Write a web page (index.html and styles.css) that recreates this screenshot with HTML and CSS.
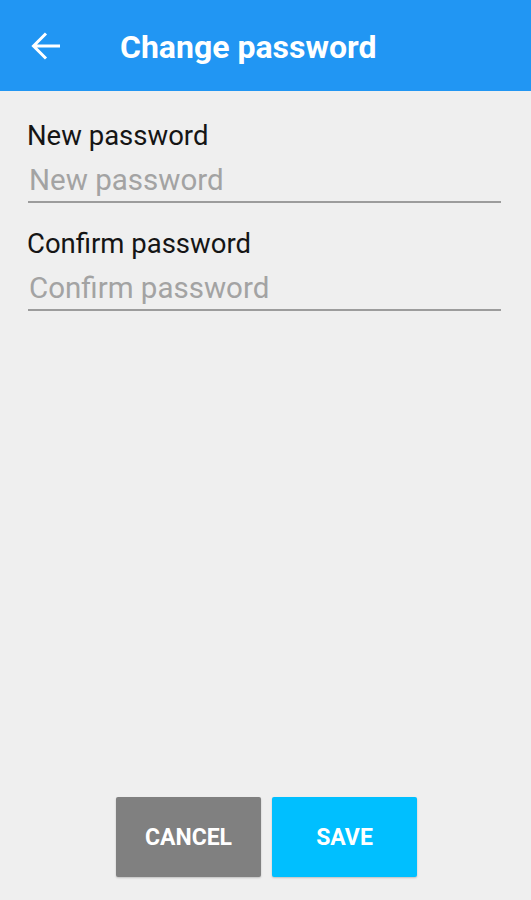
FILE: index.html
```html
<!DOCTYPE HTML>
<html lang="en">
  <head>
    <title>Change password</title>
    <meta charset="utf-8">
    <link rel="stylesheet" href="styles.css">
  </head>
  <body>
    <div id="screen">
      <div id="toolbar">
        <span class="back">
          <svg width="32" height="32" viewBox="0 0 32 32"><path d="M30 16H4M16 3.5L3.5 16 16 28.5" fill="none" stroke="#fff" stroke-width="3"/></svg>
        </span>
        <span class="title">Change password</span>
      </div>

      <div id="form">
        <div class="field">
          <label class="label">New password</label>
          <input class="input" type="password" placeholder="New password">
        </div>
        <div class="field">
          <label class="label">Confirm password</label>
          <input class="input" type="password" placeholder="Confirm password">
        </div>
      </div>

      <div id="actions">
        <button class="btn cancel">CANCEL</button>
        <button class="btn save">SAVE</button>
      </div>
    </div>
  </body>
</html>
```

FILE: styles.css
```css
html {
  height: 100%;
}
body {
  margin: 0;
  padding: 0;
  background: #efefef;
  font-family: Roboto, "Liberation Sans", sans-serif;
  height: 100%;
}

#screen {
  display: flex;
  flex-direction: column;
  height: 900px;
}

#toolbar {
  height: 91px;
  background-color: #2196f3;
  display: flex;
  align-items: center;
  color: #fff;
}

.back {
  display: flex;
  margin-left: 30px;
  width: 32px;
}

.title {
  margin-left: 58px;
  font-size: 32px;
  font-weight: bold;
  margin-top: 3px;
}

#form {
  flex: 1;
  padding: 29px 30px 0 28px;
}

.field {
  display: flex;
  flex-direction: column;
  margin-bottom: 25px;
}

.label {
  font-size: 27.5px;
  color: #151515;
  line-height: 32px;
  margin-left: -1px;
}

.input {
  box-sizing: border-box;
  border: 0;
  border-bottom: 2px solid #9c9c9c;
  background: transparent;
  font-family: Roboto, "Liberation Sans", sans-serif;
  font-size: 29.5px;
  padding: 10px 0 4px 1px;
  height: 51px;
  outline: none;
}
.input::placeholder {
  color: #a3a3a3;
}

#actions {
  display: flex;
  justify-content: center;
  gap: 11px;
  padding: 0 0 23px 2px;
}

.btn {
  width: 145px;
  height: 80px;
  border: 0;
  border-radius: 2px;
  color: #fff;
  font-family: Roboto, "Liberation Sans", sans-serif;
  font-size: 23px;
  font-weight: bold;
  box-shadow: 0 1px 2px rgba(0,0,0,0.2);
}
.cancel {
  background: #808080;
}
.save {
  background: #00bfff;
}
```
